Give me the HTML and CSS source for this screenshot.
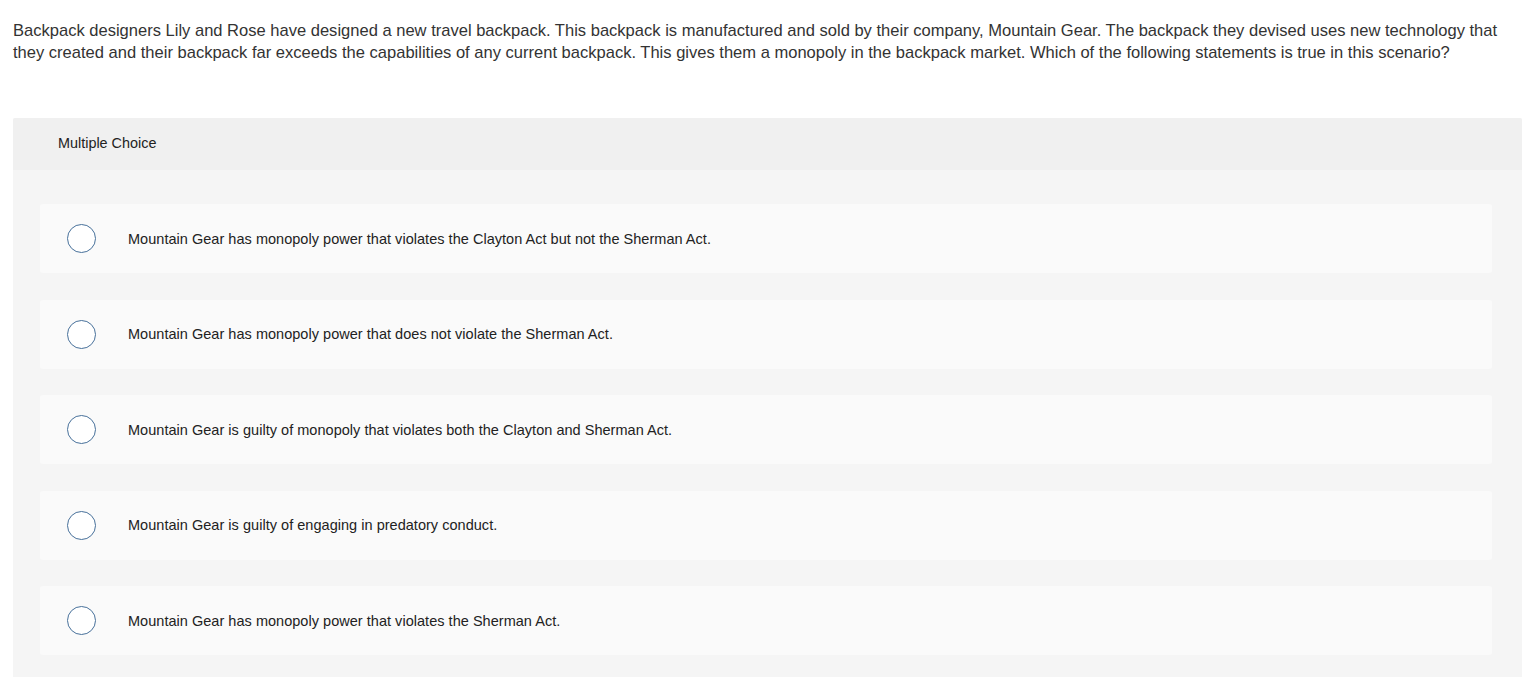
FILE: index.html
```html
<!DOCTYPE html>
<html lang="en">
<head>
<meta charset="utf-8">
<title>Multiple Choice</title>
<link rel="stylesheet" href="styles.css">
</head>
<body>
<div class="page">
  <p class="question">Backpack designers Lily and Rose have designed a new travel backpack. This backpack is manufactured and sold by their company, Mountain Gear. The backpack they devised uses new technology that they created and their backpack far exceeds the capabilities of any current backpack. This gives them a monopoly in the backpack market. Which of the following statements is true in this scenario?</p>
  <section class="panel">
    <div class="panel-head">Multiple Choice</div>
    <div class="panel-body">
      <label class="option"><span class="radio"></span><span class="opt-text">Mountain Gear has monopoly power that violates the Clayton Act but not the Sherman Act.</span></label>
      <label class="option"><span class="radio"></span><span class="opt-text">Mountain Gear has monopoly power that does not violate the Sherman Act.</span></label>
      <label class="option"><span class="radio"></span><span class="opt-text">Mountain Gear is guilty of monopoly that violates both the Clayton and Sherman Act.</span></label>
      <label class="option"><span class="radio"></span><span class="opt-text">Mountain Gear is guilty of engaging in predatory conduct.</span></label>
      <label class="option"><span class="radio"></span><span class="opt-text">Mountain Gear has monopoly power that violates the Sherman Act.</span></label>
    </div>
  </section>
</div>
</body>
</html>
```

FILE: styles.css
```css
html, body {
  margin: 0;
  padding: 0;
  background: #ffffff;
}
body {
  font-family: "Liberation Sans", Arial, sans-serif;
  color: #2b2b2b;
}
.page {
  padding: 0 6px 0 13px;
}
.question {
  margin: 0 7px 0 0;
  padding-top: 20px;
  font-size: 16.55px;
  line-height: 22px;
  color: #333333;
}
.panel {
  margin-top: 54px;
  border-radius: 2px;
  background: #f5f5f5;
  overflow: hidden;
}
.panel-head {
  height: 50px;
  padding-bottom: 2px;
  display: flex;
  align-items: center;
  padding-left: 45px;
  background: #f0f0f0;
  font-size: 14.4px;
  color: #222;
}
.panel-body {
  display: flex;
  flex-direction: column;
  gap: 26.5px;
  padding: 34px 30px 30px 27px;
}
.option {
  height: 69px;
  display: flex;
  align-items: center;
  background: #fafafa;
  border-radius: 3px;
  font-size: 14.5px;
  letter-spacing: 0.03px;
  color: #222;
}
.radio {
  box-sizing: border-box;
  width: 29px;
  height: 29px;
  margin-left: 27px;
  margin-right: 32px;
  border: 1.5px solid #47709a;
  border-radius: 50%;
  background: #ffffff;
  flex: none;
}
```
